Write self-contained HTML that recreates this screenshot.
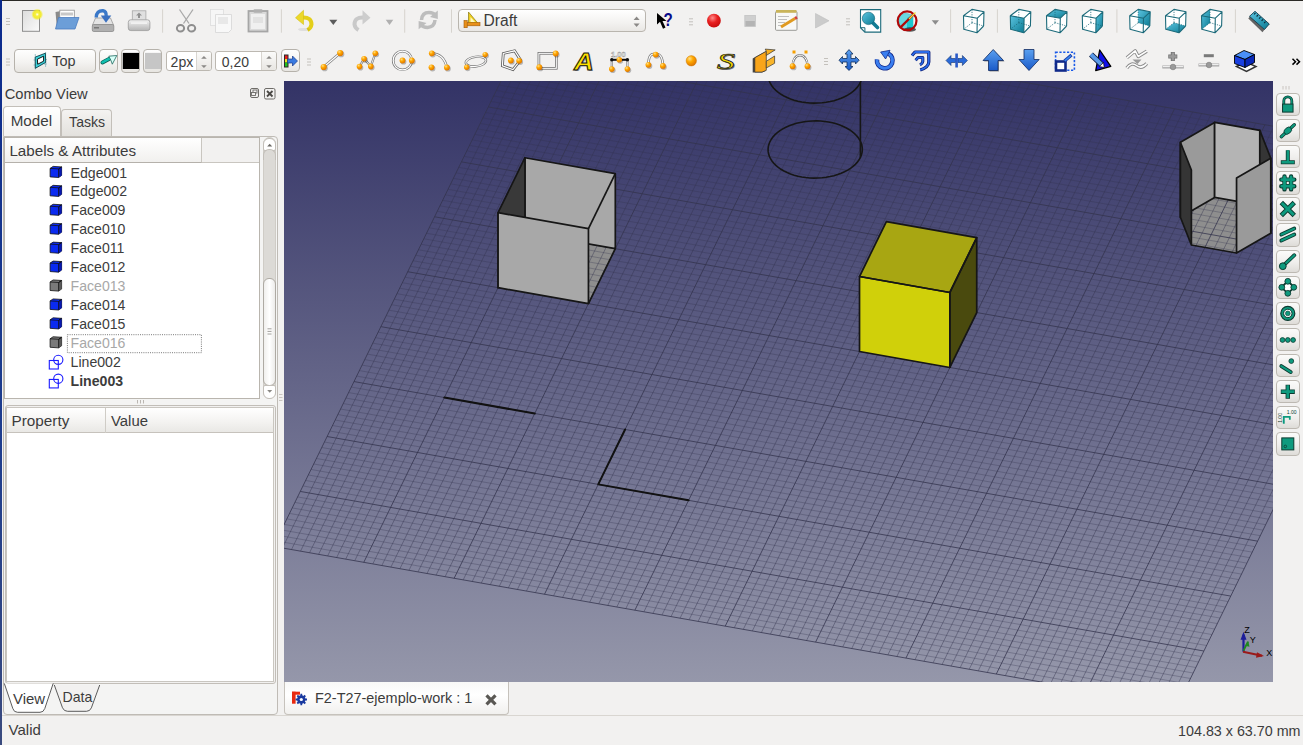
<!DOCTYPE html><html><head><meta charset="utf-8"><style>
*{margin:0;padding:0;box-sizing:border-box}
html,body{width:1303px;height:745px;overflow:hidden;background:#f2f1f0}
body{position:relative;font-family:"Liberation Sans",sans-serif;color:#3c3c3c;font-size:14px}
.a{position:absolute}
.t{position:absolute;white-space:nowrap;line-height:1}
</style></head><body><div class="a" style="left:0;top:0;width:1303px;height:1px;background:#2b2a26"></div>
<svg width="989" height="601" viewBox="284 81 989 601" style="position:absolute;left:284px;top:81px;display:block">
<defs><linearGradient id="bg" x1="0" y1="0" x2="0" y2="1"><stop offset="0" stop-color="#333366"/><stop offset="1" stop-color="#9597aa"/></linearGradient></defs>
<rect x="284" y="81" width="989" height="601" fill="url(#bg)"/>
<polygon points="524.94,232.74 615.3,248.7 588.44,303.63 498.08,287.67" fill="#8e8e8e"/>
<polygon points="1180.41,217.23 1214.63,197.43 1259.81,205.41 1270.77,233.19 1236.55,252.99 1191.37,245.01" fill="#8e8e8e"/>
<path d="M551.06 -1.34 L282.46 547.96 M560.09 0.25 L291.49 549.55 M569.13 1.85 L300.53 551.15 M578.16 3.44 L309.56 552.74 M587.2 5.04 L318.6 554.34 M596.24 6.64 L327.64 555.94 M605.27 8.23 L336.67 557.53 M614.31 9.83 L345.71 559.13 M623.34 11.42 L354.74 560.72 M641.42 14.62 L372.82 563.92 M650.45 16.21 L381.85 565.51 M659.49 17.81 L390.89 567.11 M668.52 19.4 L399.92 568.7 M677.56 21 L408.96 570.3 M686.6 22.6 L418 571.9 M695.63 24.19 L427.03 573.49 M704.67 25.79 L436.07 575.09 M713.7 27.38 L445.1 576.68 M731.78 30.58 L463.18 579.88 M740.81 32.17 L472.21 581.47 M749.85 33.77 L481.25 583.07 M758.88 35.36 L490.28 584.66 M767.92 36.96 L499.32 586.26 M776.96 38.56 L508.36 587.86 M785.99 40.15 L517.39 589.45 M795.03 41.75 L526.43 591.05 M804.06 43.34 L535.46 592.64 M822.14 46.54 L553.54 595.84 M831.17 48.13 L562.57 597.43 M840.21 49.73 L571.61 599.03 M849.24 51.32 L580.64 600.62 M858.28 52.92 L589.68 602.22 M867.32 54.52 L598.72 603.82 M876.35 56.11 L607.75 605.41 M885.39 57.71 L616.79 607.01 M894.42 59.3 L625.82 608.6 M912.5 62.5 L643.9 611.8 M921.53 64.09 L652.93 613.39 M930.57 65.69 L661.97 614.99 M939.6 67.28 L671 616.58 M948.64 68.88 L680.04 618.18 M957.68 70.48 L689.08 619.78 M966.71 72.07 L698.11 621.37 M975.75 73.67 L707.15 622.97 M984.78 75.26 L716.18 624.56 M1002.86 78.46 L734.26 627.76 M1011.89 80.05 L743.29 629.35 M1020.93 81.65 L752.33 630.95 M1029.96 83.24 L761.36 632.54 M1039 84.84 L770.4 634.14 M1048.04 86.44 L779.44 635.74 M1057.07 88.03 L788.47 637.33 M1066.11 89.63 L797.51 638.93 M1075.14 91.22 L806.54 640.52 M1093.22 94.42 L824.62 643.72 M1102.25 96.01 L833.65 645.31 M1111.29 97.61 L842.69 646.91 M1120.32 99.2 L851.72 648.5 M1129.36 100.8 L860.76 650.1 M1138.4 102.4 L869.8 651.7 M1147.43 103.99 L878.83 653.29 M1156.47 105.59 L887.87 654.89 M1165.5 107.18 L896.9 656.48 M1183.58 110.38 L914.98 659.68 M1192.61 111.97 L924.01 661.27 M1201.65 113.57 L933.05 662.87 M1210.68 115.16 L942.08 664.46 M1219.72 116.76 L951.12 666.06 M1228.76 118.36 L960.16 667.66 M1237.79 119.95 L969.19 669.25 M1246.83 121.55 L978.23 670.85 M1255.86 123.14 L987.26 672.44 M1273.94 126.34 L1005.34 675.64 M1282.97 127.93 L1014.37 677.23 M1292.01 129.53 L1023.41 678.83 M1301.04 131.12 L1032.44 680.42 M1310.08 132.72 L1041.48 682.02 M1319.12 134.32 L1050.52 683.62 M1328.15 135.91 L1059.55 685.21 M1337.19 137.51 L1068.59 686.81 M1346.22 139.1 L1077.62 688.4 M1364.3 142.3 L1095.7 691.6 M1373.33 143.89 L1104.73 693.19 M1382.37 145.49 L1113.77 694.79 M1391.4 147.08 L1122.8 696.38 M1400.44 148.68 L1131.84 697.98 M1409.48 150.28 L1140.88 699.58 M1418.51 151.87 L1149.91 701.17 M1427.55 153.47 L1158.95 702.77 M1436.58 155.06 L1167.98 704.36" stroke="#33334d" stroke-opacity="0.42" stroke-width="1" fill="none"/>
<path d="M539.33 2.55 L1442.93 162.15 M536.65 8.05 L1440.25 167.65 M533.96 13.54 L1437.56 173.14 M531.28 19.03 L1434.88 178.63 M528.59 24.52 L1432.19 184.13 M525.9 30.02 L1429.5 189.62 M523.22 35.51 L1426.82 195.11 M520.53 41 L1424.13 200.6 M517.85 46.5 L1421.45 206.1 M512.47 57.48 L1416.07 217.08 M509.79 62.98 L1413.39 222.58 M507.1 68.47 L1410.7 228.07 M504.42 73.96 L1408.02 233.56 M501.73 79.45 L1405.33 239.06 M499.04 84.95 L1402.64 244.55 M496.36 90.44 L1399.96 250.04 M493.67 95.93 L1397.27 255.53 M490.99 101.43 L1394.59 261.03 M485.61 112.41 L1389.21 272.01 M482.93 117.91 L1386.53 277.51 M480.24 123.4 L1383.84 283 M477.56 128.89 L1381.16 288.49 M474.87 134.38 L1378.47 293.99 M472.18 139.88 L1375.78 299.48 M469.5 145.37 L1373.1 304.97 M466.81 150.86 L1370.41 310.46 M464.13 156.36 L1367.73 315.96 M458.75 167.34 L1362.35 326.94 M456.07 172.84 L1359.67 332.44 M453.38 178.33 L1356.98 337.93 M450.7 183.82 L1354.3 343.42 M448.01 189.31 L1351.61 348.92 M445.32 194.81 L1348.92 354.41 M442.64 200.3 L1346.24 359.9 M439.95 205.79 L1343.55 365.39 M437.27 211.29 L1340.87 370.89 M431.89 222.27 L1335.49 381.87 M429.21 227.77 L1332.81 387.37 M426.52 233.26 L1330.12 392.86 M423.84 238.75 L1327.44 398.35 M421.15 244.25 L1324.75 403.85 M418.46 249.74 L1322.06 409.34 M415.78 255.23 L1319.38 414.83 M413.09 260.72 L1316.69 420.32 M410.41 266.22 L1314.01 425.82 M405.03 277.2 L1308.63 436.8 M402.35 282.7 L1305.95 442.3 M399.66 288.19 L1303.26 447.79 M396.98 293.68 L1300.58 453.28 M394.29 299.18 L1297.89 458.78 M391.6 304.67 L1295.2 464.27 M388.92 310.16 L1292.52 469.76 M386.23 315.65 L1289.83 475.25 M383.55 321.15 L1287.15 480.75 M378.17 332.13 L1281.77 491.73 M375.49 337.63 L1279.09 497.23 M372.8 343.12 L1276.4 502.72 M370.12 348.61 L1273.72 508.21 M367.43 354.11 L1271.03 513.71 M364.74 359.6 L1268.34 519.2 M362.06 365.09 L1265.66 524.69 M359.37 370.58 L1262.97 530.18 M356.69 376.08 L1260.29 535.68 M351.31 387.06 L1254.91 546.66 M348.63 392.56 L1252.23 552.16 M345.94 398.05 L1249.54 557.65 M343.26 403.54 L1246.86 563.14 M340.57 409.03 L1244.17 568.64 M337.88 414.53 L1241.48 574.13 M335.2 420.02 L1238.8 579.62 M332.51 425.51 L1236.11 585.11 M329.83 431.01 L1233.43 590.61 M324.45 441.99 L1228.05 601.59 M321.77 447.49 L1225.37 607.09 M319.08 452.98 L1222.68 612.58 M316.4 458.47 L1220 618.07 M313.71 463.96 L1217.31 623.57 M311.02 469.46 L1214.62 629.06 M308.34 474.95 L1211.94 634.55 M305.65 480.44 L1209.25 640.04 M302.97 485.94 L1206.57 645.54 M297.59 496.92 L1201.19 656.52 M294.91 502.42 L1198.51 662.02 M292.22 507.91 L1195.82 667.51 M289.54 513.4 L1193.14 673 M286.85 518.89 L1190.45 678.5 M284.16 524.39 L1187.76 683.99 M281.48 529.88 L1185.08 689.48 M278.79 535.37 L1182.39 694.97 M276.11 540.87 L1179.71 700.47" stroke="#33334d" stroke-opacity="0.3" stroke-width="1" fill="none"/>
<path d="M542.02 -2.94 L273.42 546.36 M632.38 13.02 L363.78 562.32 M722.74 28.98 L454.14 578.28 M813.1 44.94 L544.5 594.24 M903.46 60.9 L634.86 610.2 M993.82 76.86 L725.22 626.16 M1084.18 92.82 L815.58 642.12 M1174.54 108.78 L905.94 658.08 M1264.9 124.74 L996.3 674.04 M1355.26 140.7 L1086.66 690 M1445.62 156.66 L1177.02 705.96 M542.02 -2.94 L1445.62 156.66 M515.16 51.99 L1418.76 211.59 M488.3 106.92 L1391.9 266.52 M461.44 161.85 L1365.04 321.45 M434.58 216.78 L1338.18 376.38 M407.72 271.71 L1311.32 431.31 M380.86 326.64 L1284.46 486.24 M354 381.57 L1257.6 541.17 M327.14 436.5 L1230.74 596.1 M300.28 491.43 L1203.88 651.03 M273.42 546.36 L1177.02 705.96" stroke="#33334d" stroke-opacity="0.78" stroke-width="1" fill="none"/>
<path d="M444.36 397.53 L534.72 413.49" fill="none" stroke="#111" stroke-width="2" stroke-linecap="round"/>
<path d="M625.08 429.45 L598.22 484.38 L688.58 500.34" fill="none" stroke="#111" stroke-width="2" stroke-linejoin="round" stroke-linecap="round"/>
<path d="M860.38 157.48 L859.04 159.84 L857.36 162.13 L855.36 164.32 L853.06 166.39 L850.47 168.34 L847.61 170.14 L844.51 171.79 L841.18 173.27 L837.65 174.56 L833.95 175.67 L830.11 176.58 L826.16 177.28 L822.12 177.76 L818.03 178.04 L813.92 178.09 L809.82 177.93 L805.76 177.56 L801.77 176.97 L797.88 176.16 L794.13 175.16 L790.53 173.96 L787.13 172.58 L783.93 171.02 L780.98 169.3 L778.28 167.42 L775.87 165.41 L773.76 163.28 L771.96 161.04 L770.49 158.72 L769.36 156.32 L768.58 153.87 L768.15 151.39 L768.08 148.9 L768.37 146.41 L769.02 143.94 L770.02 141.52 L771.36 139.16 L773.04 136.87 L775.04 134.68 L777.34 132.61 L779.93 130.66 L782.79 128.86 L785.89 127.21 L789.22 125.73 L792.75 124.44 L796.45 123.33 L800.29 122.42 L804.24 121.72 L808.28 121.24 L812.37 120.96 L816.48 120.91 L820.58 121.07 L824.64 121.44 L828.63 122.03 L832.52 122.84 L836.27 123.84 L839.87 125.04 L843.27 126.42 L846.47 127.98 L849.42 129.7 L852.12 131.58 L854.53 133.59 L856.64 135.72 L858.44 137.96 L859.91 140.28 L861.04 142.68 L861.82 145.13 L862.25 147.61 L862.32 150.1 L862.03 152.59 L861.38 155.06 L860.38 157.48 Z" fill="none" stroke="#161616" stroke-width="1.6"/>
<path d="M860.38 82.48 L859.04 84.84 L857.36 87.13 L855.36 89.32 L853.06 91.39 L850.47 93.34 L847.61 95.14 L844.51 96.79 L841.18 98.27 L837.65 99.56 L833.95 100.67 L830.11 101.58 L826.16 102.28 L822.12 102.76 L818.03 103.04 L813.92 103.09 L809.82 102.93 L805.76 102.56 L801.77 101.97 L797.88 101.16 L794.13 100.16 L790.53 98.96 L787.13 97.58 L783.93 96.02 L780.98 94.3 L778.28 92.42 L775.87 90.41 L773.76 88.28 L771.96 86.04 L770.49 83.72 L769.36 81.32 L768.58 78.87 L768.15 76.39 L768.08 73.9 L768.37 71.41 L769.02 68.94 L770.02 66.52 L771.36 64.16 L773.04 61.87 L775.04 59.68 L777.34 57.61 L779.93 55.66 L782.79 53.86 L785.89 52.21 L789.22 50.73 L792.75 49.44 L796.45 48.33 L800.29 47.42 L804.24 46.72 L808.28 46.24 L812.37 45.96 L816.48 45.91 L820.58 46.07 L824.64 46.44 L828.63 47.03 L832.52 47.84 L836.27 48.84 L839.87 50.04 L843.27 51.42 L846.47 52.98 L849.42 54.7 L852.12 56.58 L854.53 58.59 L856.64 60.72 L858.44 62.96 L859.91 65.28 L861.04 67.68 L861.82 70.13 L862.25 72.61 L862.32 75.1 L862.03 77.59 L861.38 80.06 L860.38 82.48 Z" fill="none" stroke="#161616" stroke-width="1.6"/>
<line x1="860.38" y1="82.48" x2="860.38" y2="157.48" stroke="#161616" stroke-width="1.6"/>
<polygon points="524.94,232.74 615.3,248.7 615.3,173.7 524.94,157.74" fill="#a8a8a8"/>
<path d="M524.94 232.74 L615.3 248.7 L615.3 173.7 L524.94 157.74 Z" fill="none" stroke="#161616" stroke-width="1.7" stroke-linejoin="round"/>
<polygon points="524.94,232.74 498.08,287.67 498.08,212.67 524.94,157.74" fill="#393939"/>
<path d="M524.94 232.74 L498.08 287.67 L498.08 212.67 L524.94 157.74 Z" fill="none" stroke="#161616" stroke-width="1.7" stroke-linejoin="round"/>
<path d="M588.44 303.63 L615.3 248.7" fill="none" stroke="#161616" stroke-width="1.7"/>
<path d="M588.44 228.63 L615.3 173.7" fill="none" stroke="#161616" stroke-width="1.7"/>
<polygon points="498.08,287.67 588.44,303.63 588.44,228.63 498.08,212.67" fill="#a8a8a8"/>
<path d="M498.08 287.67 L588.44 303.63 L588.44 228.63 L498.08 212.67 Z" fill="none" stroke="#161616" stroke-width="1.7" stroke-linejoin="round"/>
<polygon points="886.38,221.58 976.74,237.54 949.88,292.47 859.52,276.51" fill="#a8a612"/>
<polygon points="859.52,351.51 949.88,367.47 949.88,292.47 859.52,276.51" fill="#d0d00a"/>
<polygon points="949.88,367.47 976.74,312.54 976.74,237.54 949.88,292.47" fill="#4a4a0e"/>
<path d="M886.38 221.58 L976.74 237.54 L949.88 292.47 L859.52 276.51 Z" fill="none" stroke="#161616" stroke-width="1.7" stroke-linejoin="round"/>
<path d="M859.52 351.51 L949.88 367.47 L949.88 292.47 L859.52 276.51 Z" fill="none" stroke="#161616" stroke-width="1.7" stroke-linejoin="round"/>
<path d="M949.88 367.47 L976.74 312.54 L976.74 237.54 L949.88 292.47 Z" fill="none" stroke="#161616" stroke-width="1.7" stroke-linejoin="round"/>
<polygon points="1180.41,217.23 1214.63,197.43 1214.63,122.43 1180.41,142.23" fill="#9a9a9a"/>
<path d="M1180.41 217.23 L1214.63 197.43 L1214.63 122.43 L1180.41 142.23 Z" fill="none" stroke="#161616" stroke-width="1.7" stroke-linejoin="round"/>
<polygon points="1214.63,197.43 1259.81,205.41 1259.81,130.41 1214.63,122.43" fill="#b4b4b4"/>
<path d="M1214.63 197.43 L1259.81 205.41 L1259.81 130.41 L1214.63 122.43 Z" fill="none" stroke="#161616" stroke-width="1.7" stroke-linejoin="round"/>
<polygon points="1259.81,205.41 1270.77,233.19 1270.77,158.19 1259.81,130.41" fill="#353535"/>
<path d="M1259.81 205.41 L1270.77 233.19 L1270.77 158.19 L1259.81 130.41 Z" fill="none" stroke="#161616" stroke-width="1.7" stroke-linejoin="round"/>
<polygon points="1191.37,245.01 1180.41,217.23 1180.41,142.23 1191.37,170.01" fill="#353535"/>
<path d="M1191.37 245.01 L1180.41 217.23 L1180.41 142.23 L1191.37 170.01 Z" fill="none" stroke="#161616" stroke-width="1.7" stroke-linejoin="round"/>
<polygon points="1270.77,233.19 1236.55,252.99 1236.55,177.99 1270.77,158.19" fill="#9a9a9a"/>
<path d="M1270.77 233.19 L1236.55 252.99 L1236.55 177.99 L1270.77 158.19 Z" fill="none" stroke="#161616" stroke-width="1.7" stroke-linejoin="round"/>
<path d="M1236.55 252.99 L1191.37 245.01" fill="none" stroke="#161616" stroke-width="1.7"/>
<g stroke-linecap="butt">
<line x1="1243.5" y1="651.7" x2="1243.5" y2="634.7" stroke="#1d1d9a" stroke-width="2.2"/>
<polygon points="1243.5,631.7 1240.5,639.7 1246.5,639.7" fill="#1d1d9a"/>
<line x1="1243" y1="651.7" x2="1262" y2="655.7" stroke="#9a1a1a" stroke-width="2"/>
<polygon points="1264,656 1257,652.2 1256,657.7" fill="#9a1a1a"/>
<line x1="1243.5" y1="650.7" x2="1248" y2="641.7" stroke="#1f8a1f" stroke-width="1.8"/>
<polygon points="1248.3,641.2 1245,645.7 1249.5,646.7" fill="#1f8a1f"/>
</g>
<g font-family="Liberation Sans, sans-serif" font-size="9" fill="#000">
<text x="1244.3" y="633">Z</text><text x="1249.8" y="642.6">Y</text><text x="1266.3" y="656">X</text>
</g>
</svg>
<div class="a" style="left:458px;top:9.3px;width:187.5px;height:22.6px;border:1px solid #b9b5ae;border-radius:4px;background:linear-gradient(#ffffff,#f3f2f0 60%,#e9e7e4)"></div>
<div class="t" style="left:483.5px;top:12.59px;font-size:15.6px;color:#3c3c3c;">Draft</div>
<div class="a" style="left:14.2px;top:49.4px;width:82px;height:23.2px;border:1px solid #b6b2ab;border-radius:4px;background:linear-gradient(#fefefe,#f4f3f1 55%,#e7e5e1)"></div>
<div class="t" style="left:52.2px;top:53.81px;font-size:14.4px;color:#3c3c3c;">Top</div>
<div class="a" style="left:99.2px;top:49.4px;width:19.1px;height:23.2px;border:1px solid #b6b2ab;border-radius:4px;background:linear-gradient(#fefefe,#f4f3f1 55%,#e7e5e1)"></div>
<div class="a" style="left:121.2px;top:49.4px;width:19.1px;height:23.2px;border:1px solid #b6b2ab;border-radius:4px;background:linear-gradient(#fefefe,#f4f3f1 55%,#e7e5e1)"></div>
<div class="a" style="left:143.2px;top:49.4px;width:19.1px;height:23.2px;border:1px solid #b6b2ab;border-radius:4px;background:linear-gradient(#fefefe,#f4f3f1 55%,#e7e5e1)"></div>
<div class="a" style="left:165.6px;top:51.2px;width:46.1px;height:19.6px;border:1px solid #bcb8b1;border-radius:3px;background:#fff"></div>
<div class="a" style="left:196.2px;top:52.2px;width:14.5px;height:17.6px;border-left:1px solid #d8d5d0;border-radius:0 2px 2px 0;background:linear-gradient(#fbfbfa,#e8e6e2)"></div>
<div class="t" style="left:170.6px;top:54.86px;font-size:14.1px;color:#3c3c3c;">2px</div>
<div class="a" style="left:215.3px;top:51.2px;width:61.5px;height:19.6px;border:1px solid #bcb8b1;border-radius:3px;background:#fff"></div>
<div class="a" style="left:261.3px;top:52.2px;width:14.5px;height:17.6px;border-left:1px solid #d8d5d0;border-radius:0 2px 2px 0;background:linear-gradient(#fbfbfa,#e8e6e2)"></div>
<div class="t" style="left:221.8px;top:54.95px;font-size:14px;color:#3c3c3c;">0,20</div>
<div class="a" style="left:280.5px;top:49.3px;width:19.2px;height:23.1px;border:1px solid #b6b2ab;border-radius:4px;background:linear-gradient(#fefefe,#f4f3f1 55%,#e7e5e1)"></div>
<div class="t" style="left:4.7px;top:86.96px;font-size:14.7px;color:#3c3c3c;">Combo View</div>
<div class="a" style="left:2.5px;top:135.5px;width:275.5px;height:579.5px;border:1px solid #bfbbb5;border-radius:0 4px 4px 4px;background:#f4f4f3"></div>
<div class="a" style="left:60.7px;top:108.9px;width:50.9px;height:27.1px;border:1px solid #c3bfb9;border-bottom:none;border-radius:4px 4px 0 0;background:linear-gradient(#f4f3f1,#e3e1dd)"></div>
<div class="a" style="left:2.7px;top:106.2px;width:58.3px;height:30.3px;border:1px solid #c3bfb9;border-bottom:none;border-radius:4px 4px 0 0;background:linear-gradient(#ffffff,#f4f3f1)"></div>
<div class="t" style="left:10.7px;top:112.73px;font-size:15.2px;color:#3c3c3c;">Model</div>
<div class="t" style="left:69.1px;top:115.06px;font-size:14.1px;color:#3c3c3c;">Tasks</div>
<div class="a" style="left:4.3px;top:137px;width:256px;height:262px;border:1px solid #b9b5ae;background:#fff"></div>
<div class="a" style="left:5.3px;top:138px;width:254px;height:25.2px;background:#f2f1f0;border-bottom:1px solid #c9c6c0"></div>
<div class="a" style="left:5.3px;top:138px;width:197px;height:25.2px;background:linear-gradient(#ffffff,#f1f0ee);border-right:1px solid #c9c6c0;border-bottom:1px solid #b5b1ab"></div>
<div class="t" style="left:9.4px;top:142.93px;font-size:15.2px;color:#3c3c3c;">Labels &amp; Attributes</div>
<div class="t" style="left:70.6px;top:165.56px;font-size:14.1px;color:#3c3c3c;">Edge001</div>
<div class="t" style="left:70.6px;top:184.49px;font-size:14.1px;color:#3c3c3c;">Edge002</div>
<div class="t" style="left:70.6px;top:203.42px;font-size:14.1px;color:#3c3c3c;">Face009</div>
<div class="t" style="left:70.6px;top:222.35px;font-size:14.1px;color:#3c3c3c;">Face010</div>
<div class="t" style="left:70.6px;top:241.28px;font-size:14.1px;color:#3c3c3c;">Face011</div>
<div class="t" style="left:70.6px;top:260.21px;font-size:14.1px;color:#3c3c3c;">Face012</div>
<div class="t" style="left:70.6px;top:279.14px;font-size:14.1px;color:#a8a8a8;">Face013</div>
<div class="t" style="left:70.6px;top:298.07px;font-size:14.1px;color:#3c3c3c;">Face014</div>
<div class="t" style="left:70.6px;top:317px;font-size:14.1px;color:#3c3c3c;">Face015</div>
<div class="t" style="left:70.6px;top:335.93px;font-size:14.1px;color:#a8a8a8;">Face016</div>
<div class="t" style="left:70.6px;top:354.86px;font-size:14.1px;color:#3c3c3c;">Line002</div>
<div class="t" style="left:70.6px;top:373.79px;font-size:14.1px;color:#3c3c3c;font-weight:bold;">Line003</div>
<div class="a" style="left:262.8px;top:137px;width:13.6px;height:262.2px;border:1px solid #cfccc6;border-radius:7px;background:#dcdad6"></div>
<div class="a" style="left:263.4px;top:137.6px;width:12.4px;height:13.4px;border:1px solid #c3bfb9;border-radius:6px 6px 2px 2px;background:#fff"></div>
<div class="a" style="left:263.4px;top:148.7px;width:12.4px;height:11.3px;border:1px solid #c3bfb9;border-bottom:none;border-radius:6px 6px 0 0;background:#dcdad6"></div>
<div class="a" style="left:263.4px;top:278px;width:12.4px;height:107.5px;border:1px solid #aeaaa3;border-radius:6px;background:linear-gradient(90deg,#f0efed,#ffffff 50%,#ecebe9)"></div>
<div class="a" style="left:263.4px;top:385px;width:12.4px;height:14px;border:1px solid #c3bfb9;border-radius:2px 2px 6px 6px;background:#fff"></div>
<div class="a" style="left:4.5px;top:405px;width:271.5px;height:278.6px;border:1px solid #c2beb8;border-radius:3px;background:#f2f1f0"></div>
<div class="a" style="left:5.5px;top:406.8px;width:268.8px;height:275.4px;border:1px solid #c9c6c0;background:#fff"></div>
<div class="a" style="left:6.5px;top:407.8px;width:266.8px;height:25px;background:linear-gradient(#ffffff,#f3f2f0 60%,#e9e8e5);border-bottom:1px solid #c6c2bc"></div>
<div class="a" style="left:6.5px;top:407.8px;width:99.9px;height:25px;border-right:1px solid #cfccc6"></div>
<div class="t" style="left:11.5px;top:412.75px;font-size:15.3px;color:#3c3c3c;">Property</div>
<div class="t" style="left:111px;top:413.79px;font-size:14.9px;color:#3c3c3c;">Value</div>
<div class="a" style="left:284px;top:682px;width:224.6px;height:32.5px;border:1px solid #c6c2bc;border-top:none;border-radius:0 0 4px 4px;background:linear-gradient(#f8f8f7,#ffffff 40%,#f1f0ee)"></div>
<div class="t" style="left:315px;top:691.37px;font-size:14.45px;color:#3c3c3c;">F2-T27-ejemplo-work : 1</div>
<div class="a" style="left:0px;top:715px;width:1303px;height:1px;background:#d9d6d1"></div>
<div class="t" style="left:8.6px;top:722px;font-size:15px;color:#3c3c3c;">Valid</div>
<div class="t" style="left:1178.1px;top:723.9px;font-size:14.3px;color:#3c3c3c;">104.83 x 63.70 mm</div>
<div class="a" style="left:1276px;top:92.9px;width:23.6px;height:23.4px;border:1px solid #bdb9b2;border-radius:4px;background:linear-gradient(#fbfbfa,#efeeec 55%,#dedcd8)"></div>
<div class="a" style="left:1276px;top:119px;width:23.6px;height:23.4px;border:1px solid #bdb9b2;border-radius:4px;background:linear-gradient(#fbfbfa,#efeeec 55%,#dedcd8)"></div>
<div class="a" style="left:1276px;top:145.1px;width:23.6px;height:23.4px;border:1px solid #bdb9b2;border-radius:4px;background:linear-gradient(#fbfbfa,#efeeec 55%,#dedcd8)"></div>
<div class="a" style="left:1276px;top:171.2px;width:23.6px;height:23.4px;border:1px solid #bdb9b2;border-radius:4px;background:linear-gradient(#fbfbfa,#efeeec 55%,#dedcd8)"></div>
<div class="a" style="left:1276px;top:197.3px;width:23.6px;height:23.4px;border:1px solid #bdb9b2;border-radius:4px;background:linear-gradient(#fbfbfa,#efeeec 55%,#dedcd8)"></div>
<div class="a" style="left:1276px;top:223.4px;width:23.6px;height:23.4px;border:1px solid #bdb9b2;border-radius:4px;background:linear-gradient(#fbfbfa,#efeeec 55%,#dedcd8)"></div>
<div class="a" style="left:1276px;top:249.5px;width:23.6px;height:23.4px;border:1px solid #bdb9b2;border-radius:4px;background:linear-gradient(#fbfbfa,#efeeec 55%,#dedcd8)"></div>
<div class="a" style="left:1276px;top:275.6px;width:23.6px;height:23.4px;border:1px solid #bdb9b2;border-radius:4px;background:linear-gradient(#fbfbfa,#efeeec 55%,#dedcd8)"></div>
<div class="a" style="left:1276px;top:301.7px;width:23.6px;height:23.4px;border:1px solid #bdb9b2;border-radius:4px;background:linear-gradient(#fbfbfa,#efeeec 55%,#dedcd8)"></div>
<div class="a" style="left:1276px;top:327.8px;width:23.6px;height:23.4px;border:1px solid #bdb9b2;border-radius:4px;background:linear-gradient(#fbfbfa,#efeeec 55%,#dedcd8)"></div>
<div class="a" style="left:1276px;top:353.9px;width:23.6px;height:23.4px;border:1px solid #bdb9b2;border-radius:4px;background:linear-gradient(#fbfbfa,#efeeec 55%,#dedcd8)"></div>
<div class="a" style="left:1276px;top:380px;width:23.6px;height:23.4px;border:1px solid #bdb9b2;border-radius:4px;background:linear-gradient(#fbfbfa,#efeeec 55%,#dedcd8)"></div>
<div class="a" style="left:1276px;top:406.1px;width:23.6px;height:23.4px;border:1px solid #bdb9b2;border-radius:4px;background:linear-gradient(#fbfbfa,#efeeec 55%,#dedcd8)"></div>
<div class="a" style="left:1276px;top:432.2px;width:23.6px;height:23.4px;border:1px solid #bdb9b2;border-radius:4px;background:linear-gradient(#fbfbfa,#efeeec 55%,#dedcd8)"></div>
<svg width="1303" height="745" viewBox="0 0 1303 745" style="position:absolute;left:0;top:0"><rect x="6" y="18" width="4" height="1" fill="#c4c1bc"/>
<rect x="6" y="21" width="4" height="1" fill="#c4c1bc"/>
<rect x="6" y="24" width="4" height="1" fill="#c4c1bc"/>
<defs><linearGradient id="gpage" x1="0" y1="0" x2="1" y2="1"><stop offset="0" stop-color="#dcdcdc"/><stop offset="1" stop-color="#fbfbfb"/></linearGradient><radialGradient id="gglow"><stop offset="0" stop-color="#ffffff"/><stop offset="0.3" stop-color="#f6f040"/><stop offset="0.65" stop-color="#f2ea20" stop-opacity="0.9"/><stop offset="1" stop-color="#f4ee30" stop-opacity="0"/></radialGradient><radialGradient id="gred" cx="0.4" cy="0.3" r="0.7"><stop offset="0" stop-color="#ff8a8a"/><stop offset="0.5" stop-color="#e82020"/><stop offset="1" stop-color="#c80c0c"/></radialGradient><radialGradient id="gorange" cx="0.35" cy="0.3" r="0.7"><stop offset="0" stop-color="#ffe08a"/><stop offset="0.45" stop-color="#ffa800"/><stop offset="1" stop-color="#e07800"/></radialGradient><linearGradient id="gteal" x1="0" y1="0" x2="1" y2="1"><stop offset="0" stop-color="#5cc4e0"/><stop offset="1" stop-color="#0b7b93"/></linearGradient><linearGradient id="gblue" x1="0" y1="0" x2="0" y2="1"><stop offset="0" stop-color="#5aa0f0"/><stop offset="1" stop-color="#1a5ac8"/></linearGradient><linearGradient id="gbtn" x1="0" y1="0" x2="0" y2="1"><stop offset="0" stop-color="#fdfdfc"/><stop offset="1" stop-color="#e6e4e0"/></linearGradient><linearGradient id="gprinter" x1="0" y1="0" x2="0" y2="1"><stop offset="0" stop-color="#f4f4f4"/><stop offset="1" stop-color="#b4b4b4"/></linearGradient></defs>
<rect x="22.5" y="10.5" width="17" height="20.8" fill="url(#gpage)" stroke="#8e8e8e" stroke-width="1"/>
<circle cx="37.2" cy="14.4" r="6" fill="url(#gglow)"/>
<polygon points="55.5,12 61,11 61,28 57,29" fill="#8a8a8a"/>
<rect x="59.8" y="10.2" width="14.5" height="9" fill="#fff" stroke="#909090" stroke-width="0.8"/>
<rect x="61" y="12.5" width="12" height="3" fill="#c8c8c8"/>
<polygon points="58.5,17.5 79,17.5 75,29 55.5,29" fill="#6c9ed8" stroke="#4a7cc0" stroke-width="0.8"/>
<polygon points="95.5,18 110.5,18 113.5,25 92.5,25" fill="#e4e4e4" stroke="#9a9a9a" stroke-width="0.8"/>
<rect x="92.3" y="24.5" width="21.5" height="7" rx="1.5" fill="#b0b0b0" stroke="#8a8a8a" stroke-width="0.8"/>
<rect x="94" y="27" width="5" height="1.5" fill="#777"/>
<path d="M96.2 17.5 Q96.5 10.5 103 10.8 Q106.5 11.2 106.2 16.5" fill="none" stroke="#3a78c8" stroke-width="3.4"/>
<polygon points="100.8,15.5 111.3,15.5 106,22.8" fill="#3a70c0"/>
<rect x="132.3" y="10.8" width="13.6" height="10" fill="#e0e0e0" stroke="#a8a8a8" stroke-width="0.8"/>
<polygon points="139,12.5 142,15.5 140,15.5 140,18 138,18 138,15.5 136,15.5" fill="#909090"/>
<rect x="128.3" y="19.8" width="21.6" height="10.8" rx="2.5" fill="url(#gprinter)" stroke="#9a9a9a" stroke-width="0.8"/>
<rect x="131" y="22.5" width="16" height="1.2" fill="#fafafa"/>
<rect x="162.1" y="9.3" width="1" height="23.4" fill="#d6d3ce"/>
<g fill="none" stroke="#a8a8a8" stroke-width="1.3"><path d="M179.5 9.5 L189 23.5"/><path d="M193 9.5 L183.5 23.5"/></g>
<g fill="none" stroke="#8e8e8e" stroke-width="2"><ellipse cx="180.5" cy="28.2" rx="3.6" ry="3.3"/><ellipse cx="191.6" cy="28.2" rx="3.6" ry="3.3"/></g>
<rect x="210.5" y="9.5" width="13" height="16" fill="#f6f6f6" stroke="#dcdcdc" stroke-width="0.8"/>
<path d="M215.5 14.5 h16 v15 l-3 3 h-13 z" fill="#f8f8f8" stroke="#d6d6d6" stroke-width="0.8"/>
<rect x="218" y="17" width="10" height="7" fill="#e8e8e8"/>
<rect x="248.5" y="11" width="19" height="20.5" fill="#dadada" stroke="#a6a6a6" stroke-width="1.8"/>
<rect x="251" y="14" width="14" height="15" fill="#f0f0f0"/>
<rect x="253.5" y="9.3" width="9" height="3.5" rx="1" fill="#b0b0b0"/>
<rect x="253" y="17" width="10" height="6" fill="#e2e2e2"/>
<rect x="280.9" y="9.3" width="1" height="23.4" fill="#d6d3ce"/>
<path d="M302.5 17.5 Q311.5 17 311.5 24.5 Q311 28 307.5 30" fill="none" stroke="#e4cf1a" stroke-width="4"/>
<polygon points="295.5,17.8 303.5,10.3 303.5,24.5" fill="#ecd82a" stroke="#d4c010" stroke-width="0.6"/>
<ellipse cx="304" cy="29.5" rx="6" ry="1.6" fill="#000" opacity="0.08"/>
<polygon points="329.3,19.8 337.3,19.8 333.3,25" fill="#5c5c5c"/>
<path d="M363.5 17.5 Q354.5 17 354.5 24.5 Q355 28 358.5 30" fill="none" stroke="#c9c9c9" stroke-width="4"/>
<polygon points="370.5,17.8 362.5,10.3 362.5,24.5" fill="#cdcdcd"/>
<polygon points="385.7,19.8 393.3,19.8 389.5,25" fill="#b0b0b0"/>
<rect x="404.2" y="9.3" width="1" height="23.4" fill="#d6d3ce"/>
<g fill="none" stroke="#bdbdbd" stroke-width="3.5"><path d="M421.5 20 Q422 12.5 429 12.5 Q433.5 12.5 435.5 15.5"/><path d="M435 20 Q434.5 27 427.5 27.5 Q423 27.5 421 24.5"/></g>
<polygon points="437.8,10.5 437.8,19 430,17" fill="#bdbdbd"/><polygon points="418.6,29.3 418.6,21 426.5,23" fill="#bdbdbd"/>
<rect x="451" y="9.3" width="1" height="23.4" fill="#d6d3ce"/>
<polygon points="468.5,12 468.5,24 478.5,24" fill="#f0d020" stroke="#8a7a10" stroke-width="0.7"/>
<polygon points="470.5,17 470.5,22 475,22" fill="#fff8c0"/>
<rect x="465" y="22.5" width="15" height="3.3" fill="#e8901a" stroke="#a05a08" stroke-width="0.6"/>
<rect x="464" y="20.5" width="3.2" height="7.2" fill="#e8901a" stroke="#a05a08" stroke-width="0.6"/>
<polygon points="633.6,20 639.6,20 636.6,16.6" fill="#8a8886"/><polygon points="633.6,23.5 639.6,23.5 636.6,26.9" fill="#8a8886"/>
<polygon points="657,12.9 657,24.5 660,21.8 663,28.8 665.5,27.6 662.5,21 666.5,21" fill="#000"/>
<g transform="translate(663.6 26.2) scale(0.85 1)"><text x="0" y="0" font-family="Liberation Sans" font-weight="bold" font-size="17.8" fill="#0a0a88">?</text></g>
<rect x="689" y="18.3" width="4" height="1" fill="#c4c1bc"/>
<rect x="689" y="21.3" width="4" height="1" fill="#c4c1bc"/>
<rect x="689" y="24.3" width="4" height="1" fill="#c4c1bc"/>
<circle cx="713.9" cy="20.7" r="6.9" fill="url(#gred)"/>
<rect x="744.8" y="15.4" width="10.6" height="11.2" fill="#cfcfcf" stroke="#c4c4c4" stroke-width="0.8"/>
<rect x="745.5" y="21" width="9.4" height="5" fill="#b4b4b4"/>
<rect x="775.5" y="11.5" width="21.5" height="18.8" rx="1" fill="#f8f8f6" stroke="#9a9a96" stroke-width="1"/>
<rect x="776" y="10" width="20.5" height="2.8" fill="#c9b45a"/>
<g stroke="#b8b8b8" stroke-width="0.9"><path d="M778 16.5h11M778 19.5h9M778 22.5h7M778 25.5h6"/></g>
<path d="M781 27 L795 18.5" stroke="#e09a20" stroke-width="3"/><path d="M795 18.5 L797 17.3" stroke="#d04040" stroke-width="3"/>
<polygon points="815.5,13.5 815.5,28 829,20.8" fill="#cbcbcb" stroke="#bdbdbd" stroke-width="0.6"/>
<rect x="846" y="18.3" width="4" height="1" fill="#c4c1bc"/>
<rect x="846" y="21.3" width="4" height="1" fill="#c4c1bc"/>
<rect x="846" y="24.3" width="4" height="1" fill="#c4c1bc"/>
<path d="M860.5 9.6 h20.2 v22.5 h-15.8 l-4.4 -4.4 z" fill="#fff" stroke="#1d6b7b" stroke-width="1.1"/>
<path d="M860.5 27.7 h4.4 v4.4" fill="none" stroke="#1d6b7b" stroke-width="1"/>
<line x1="872.5" y1="22.5" x2="877.5" y2="27.5" stroke="#137c94" stroke-width="3.6" stroke-linecap="round"/>
<circle cx="868.5" cy="18.4" r="6.2" fill="url(#gteal)" stroke="#0d5f72" stroke-width="0.6"/>
<polygon points="899,16 905,13 913,15 913,27 907,30 899,27" fill="#6ad8e0" stroke="#50b8c0" stroke-width="0.6"/>
<polygon points="907,18 913,15 913,27 907,30" fill="#1ec8d0"/>
<ellipse cx="910" cy="29.5" rx="6" ry="2.2" fill="#333" opacity="0.8"/>
<circle cx="907.1" cy="20.8" r="9.4" fill="none" stroke="#b00808" stroke-width="2.2"/>
<line x1="900.5" y1="27.4" x2="913.7" y2="14.2" stroke="#b00808" stroke-width="2.2"/>
<line x1="909" y1="19" x2="915.5" y2="12.5" stroke="#f0e040" stroke-width="1.2"/>
<polygon points="931.7,20.2 939,20.2 935.35,24.8" fill="#8c8c8c"/>
<rect x="950.1" y="9.3" width="1" height="23.4" fill="#d6d3ce"/>
<polygon points="963.5,15.7 972,9.4 984,11.8 983.6,26 977,32.8 963.8,29.2" fill="#fff"/><path d="M963.5,15.7 L977.3,18.2 L977,32.8 L963.8,29.2 Z M963.5,15.7 L972,9.4 L984,11.8 L977.3,18.2 M984,11.8 L983.6,26 M983.6,26 L977,32.8" stroke="#1c6a7a" stroke-width="1.1" fill="none" stroke-linejoin="round"/><path d="M972,9.4 L972,22.7 M972,22.7 L963.8,29.2 M972,22.7 L983.6,26" stroke="#1c6a7a" stroke-width="0.8" stroke-dasharray="1.2,1.2" fill="none"/>
<rect x="996.9" y="9.3" width="1" height="23.4" fill="#d6d3ce"/>
<polygon points="1010.3,15.7 1018.8,9.4 1030.8,11.8 1030.4,26 1023.8,32.8 1010.6,29.2" fill="#fff"/><polygon points="1010.3,15.7 1024.1,18.2 1023.8,32.8 1010.6,29.2" fill="url(#gteal)"/><path d="M1010.3,15.7 L1024.1,18.2 L1023.8,32.8 L1010.6,29.2 Z M1010.3,15.7 L1018.8,9.4 L1030.8,11.8 L1024.1,18.2 M1030.8,11.8 L1030.4,26 M1030.4,26 L1023.8,32.8" stroke="#1c6a7a" stroke-width="1.1" fill="none" stroke-linejoin="round"/><path d="M1018.8,9.4 L1018.8,22.7 M1018.8,22.7 L1010.6,29.2 M1018.8,22.7 L1030.4,26" stroke="#1c6a7a" stroke-width="0.8" stroke-dasharray="1.2,1.2" fill="none"/>
<polygon points="1046.5,15.7 1055,9.4 1067,11.8 1066.6,26 1060,32.8 1046.8,29.2" fill="#fff"/><polygon points="1046.5,15.7 1055,9.4 1067,11.8 1060.3,18.2" fill="url(#gteal)"/><path d="M1046.5,15.7 L1060.3,18.2 L1060,32.8 L1046.8,29.2 Z M1046.5,15.7 L1055,9.4 L1067,11.8 L1060.3,18.2 M1067,11.8 L1066.6,26 M1066.6,26 L1060,32.8" stroke="#1c6a7a" stroke-width="1.1" fill="none" stroke-linejoin="round"/><path d="M1055,9.4 L1055,22.7 M1055,22.7 L1046.8,29.2 M1055,22.7 L1066.6,26" stroke="#1c6a7a" stroke-width="0.8" stroke-dasharray="1.2,1.2" fill="none"/>
<polygon points="1082.3,15.7 1090.8,9.4 1102.8,11.8 1102.4,26 1095.8,32.8 1082.6,29.2" fill="#fff"/><polygon points="1096.1,18.2 1102.8,11.8 1102.4,26 1095.8,32.8" fill="url(#gteal)"/><path d="M1082.3,15.7 L1096.1,18.2 L1095.8,32.8 L1082.6,29.2 Z M1082.3,15.7 L1090.8,9.4 L1102.8,11.8 L1096.1,18.2 M1102.8,11.8 L1102.4,26 M1102.4,26 L1095.8,32.8" stroke="#1c6a7a" stroke-width="1.1" fill="none" stroke-linejoin="round"/><path d="M1090.8,9.4 L1090.8,22.7 M1090.8,22.7 L1082.6,29.2 M1090.8,22.7 L1102.4,26" stroke="#1c6a7a" stroke-width="0.8" stroke-dasharray="1.2,1.2" fill="none"/>
<rect x="1116.4" y="9.3" width="1" height="23.4" fill="#d6d3ce"/>
<polygon points="1129.7,15.7 1138.2,9.4 1150.2,11.8 1149.8,26 1143.2,32.8 1130,29.2" fill="#fff"/><polygon points="1138.2,9.4 1150.2,11.8 1149.8,26 1138.2,22.7" fill="url(#gteal)"/><path d="M1129.7,15.7 L1143.5,18.2 L1143.2,32.8 L1130,29.2 Z M1129.7,15.7 L1138.2,9.4 L1150.2,11.8 L1143.5,18.2 M1150.2,11.8 L1149.8,26 M1149.8,26 L1143.2,32.8" stroke="#1c6a7a" stroke-width="1.1" fill="none" stroke-linejoin="round"/><path d="M1138.2,9.4 L1138.2,22.7 M1138.2,22.7 L1130,29.2 M1138.2,22.7 L1149.8,26" stroke="#1c6a7a" stroke-width="0.8" stroke-dasharray="1.2,1.2" fill="none"/>
<polygon points="1165.5,15.7 1174,9.4 1186,11.8 1185.6,26 1179,32.8 1165.8,29.2" fill="#fff"/><polygon points="1165.8,29.2 1179,32.8 1185.6,26 1174,22.7" fill="url(#gteal)"/><path d="M1165.5,15.7 L1179.3,18.2 L1179,32.8 L1165.8,29.2 Z M1165.5,15.7 L1174,9.4 L1186,11.8 L1179.3,18.2 M1186,11.8 L1185.6,26 M1185.6,26 L1179,32.8" stroke="#1c6a7a" stroke-width="1.1" fill="none" stroke-linejoin="round"/><path d="M1174,9.4 L1174,22.7 M1174,22.7 L1165.8,29.2 M1174,22.7 L1185.6,26" stroke="#1c6a7a" stroke-width="0.8" stroke-dasharray="1.2,1.2" fill="none"/>
<polygon points="1201.5,15.7 1210,9.4 1222,11.8 1221.6,26 1215,32.8 1201.8,29.2" fill="#fff"/><polygon points="1201.5,15.7 1210,9.4 1210,22.7 1201.8,29.2" fill="url(#gteal)"/><path d="M1201.5,15.7 L1215.3,18.2 L1215,32.8 L1201.8,29.2 Z M1201.5,15.7 L1210,9.4 L1222,11.8 L1215.3,18.2 M1222,11.8 L1221.6,26 M1221.6,26 L1215,32.8" stroke="#1c6a7a" stroke-width="1.1" fill="none" stroke-linejoin="round"/><path d="M1210,9.4 L1210,22.7 M1210,22.7 L1201.8,29.2 M1210,22.7 L1221.6,26" stroke="#1c6a7a" stroke-width="0.8" stroke-dasharray="1.2,1.2" fill="none"/>
<rect x="1234.9" y="9.3" width="1" height="23.4" fill="#d6d3ce"/>
<polygon points="1248.3,18.5 1250,16.3 1264.5,29.5 1262.5,32.3" fill="#4a4a4a" opacity="0.85"/>
<polygon points="1249.5,16.3 1255,11.3 1269.3,24 1264.5,29.5" fill="url(#gteal)" stroke="#0a3040" stroke-width="0.8" stroke-linejoin="round"/>
<g stroke="#0a2a36" stroke-width="1.1"><path d="M1255.5 12.8l-1.4 1.5M1258 15l-1.4 1.5M1260.5 17.2l-1.4 1.5M1263 19.4l-1.4 1.5M1265.5 21.6l-1.4 1.5"/></g>
<rect x="6" y="58.5" width="4" height="1" fill="#c4c1bc"/>
<rect x="6" y="61.5" width="4" height="1" fill="#c4c1bc"/>
<rect x="6" y="64.5" width="4" height="1" fill="#c4c1bc"/>
<path d="M35.3 54v15.5M45.6 52v15M33.5 60h3M44 59.5h3M33.5 65h3M44 64h3" stroke="#7ab0b8" stroke-width="0.7"/>
<polygon points="35.2,57.1 45.4,53.2 45.7,62.4 35.3,68.3" fill="#3cd0d8" stroke="#0a4048" stroke-width="0.9"/>
<polygon points="37.4,59.2 43.6,56.2 43.6,61.2 37.7,64.2" fill="#fff" stroke="#000" stroke-width="0.9"/>
<path d="M102.5 62.5 L109.5 58.8" stroke="#0a5a50" stroke-width="4" stroke-linecap="round"/>
<path d="M102.5 62.3 L109.5 58.6" stroke="#10c0b0" stroke-width="2.6" stroke-linecap="round"/>
<polygon points="108.8,56.2 116.8,55.5 112.3,64.2 111,60.5" fill="#d8fff8" stroke="#1a6a60" stroke-width="0.8" stroke-linejoin="round"/>
<rect x="122.8" y="52.9" width="16.2" height="16.1" fill="#000"/>
<rect x="145" y="52.9" width="16" height="16.1" fill="#c6c6c6"/>
<polygon points="201.15,58.8 206.75,58.8 203.95,56" fill="#8a8886"/><polygon points="201.15,65.2 206.75,65.2 203.95,68" fill="#8a8886"/>
<polygon points="266.25,58.8 271.85,58.8 269.05,56" fill="#8a8886"/><polygon points="266.25,65.2 271.85,65.2 269.05,68" fill="#8a8886"/>
<rect x="284" y="54.5" width="4.5" height="13" fill="#2a2a2a"/>
<rect x="285" y="55.5" width="2.5" height="3.5" fill="#e82020"/><rect x="285" y="59" width="2.5" height="3.5" fill="#f0e020"/><rect x="285" y="62.5" width="2.5" height="4" fill="#20c020"/>
<polygon points="287.5,59 292.5,59 292.5,56 297.5,61 292.5,66 292.5,63 287.5,63" fill="#3a7ae0" stroke="#1a3a8a" stroke-width="0.7"/>
<rect x="307" y="58.5" width="4" height="1" fill="#c4c1bc"/>
<rect x="307" y="61.5" width="4" height="1" fill="#c4c1bc"/>
<rect x="307" y="64.5" width="4" height="1" fill="#c4c1bc"/>
<path d="M323.7 67 L340.2 53" fill="none" stroke="#7a7a7a" stroke-width="2.6" stroke-linejoin="round"/>
<path d="M323.7 67 L340.2 53" fill="none" stroke="#fff" stroke-width="1.2" stroke-linejoin="round"/>
<circle cx="324.7" cy="68.2" r="3.1" fill="#000" opacity="0.25"/>
<circle cx="323.7" cy="67" r="3.1" fill="url(#gorange)"/>
<circle cx="341.2" cy="54.2" r="3.1" fill="#000" opacity="0.25"/>
<circle cx="340.2" cy="53" r="3.1" fill="url(#gorange)"/>
<path d="M359.5 66.6 L364.1 58.7 L370.8 66.4 L375.3 53.3" fill="none" stroke="#7a7a7a" stroke-width="2.2" stroke-linejoin="round"/>
<path d="M359.5 66.6 L364.1 58.7 L370.8 66.4 L375.3 53.3" fill="none" stroke="#fff" stroke-width="0.8" stroke-linejoin="round"/>
<circle cx="360.5" cy="67.8" r="2.8" fill="#000" opacity="0.25"/>
<circle cx="359.5" cy="66.6" r="2.8" fill="url(#gorange)"/>
<circle cx="365.1" cy="59.9" r="2.8" fill="#000" opacity="0.25"/>
<circle cx="364.1" cy="58.7" r="2.8" fill="url(#gorange)"/>
<circle cx="371.8" cy="67.6" r="2.8" fill="#000" opacity="0.25"/>
<circle cx="370.8" cy="66.4" r="2.8" fill="url(#gorange)"/>
<circle cx="376.3" cy="54.5" r="2.8" fill="#000" opacity="0.25"/>
<circle cx="375.3" cy="53.3" r="2.8" fill="url(#gorange)"/>
<circle cx="402.5" cy="60.5" r="9.3" fill="none" stroke="#7a7a7a" stroke-width="2.6"/><circle cx="402.5" cy="60.5" r="9.3" fill="none" stroke="#fff" stroke-width="1.2"/>
<circle cx="403.5" cy="61.7" r="2.9" fill="#000" opacity="0.25"/>
<circle cx="402.5" cy="60.5" r="2.9" fill="url(#gorange)"/>
<circle cx="412.8" cy="61.7" r="2.9" fill="#000" opacity="0.25"/>
<circle cx="411.8" cy="60.5" r="2.9" fill="url(#gorange)"/>
<path d="M431.8 53.3 Q444 54 446.9 67.5" fill="none" stroke="#7a7a7a" stroke-width="2.6"/><path d="M431.8 53.3 Q444 54 446.9 67.5" fill="none" stroke="#fff" stroke-width="1.2"/>
<circle cx="432.8" cy="54.5" r="2.9" fill="#000" opacity="0.25"/>
<circle cx="431.8" cy="53.3" r="2.9" fill="url(#gorange)"/>
<circle cx="432.5" cy="68.5" r="2.9" fill="#000" opacity="0.25"/>
<circle cx="431.5" cy="67.3" r="2.9" fill="url(#gorange)"/>
<circle cx="447.9" cy="68.7" r="2.9" fill="#000" opacity="0.25"/>
<circle cx="446.9" cy="67.5" r="2.9" fill="url(#gorange)"/>
<ellipse cx="475.9" cy="61.6" rx="10.2" ry="4.8" transform="rotate(-8 475.9 61.6)" fill="none" stroke="#7a7a7a" stroke-width="2.4"/><ellipse cx="475.9" cy="61.6" rx="10.2" ry="4.8" transform="rotate(-8 475.9 61.6)" fill="none" stroke="#fff" stroke-width="1"/>
<circle cx="467.7" cy="68.5" r="2.7" fill="#000" opacity="0.25"/>
<circle cx="466.7" cy="67.3" r="2.7" fill="url(#gorange)"/>
<circle cx="486.2" cy="55.8" r="2.7" fill="#000" opacity="0.25"/>
<circle cx="485.2" cy="54.6" r="2.7" fill="url(#gorange)"/>
<polygon points="503.3,53.5 514.6,50.8 520.5,60 513,69.6 502.4,65.9" fill="none" stroke="#5a5a5a" stroke-width="2.8"/><polygon points="503.3,53.5 514.6,50.8 520.5,60 513,69.6 502.4,65.9" fill="none" stroke="#fff" stroke-width="1.2"/>
<circle cx="511.8" cy="61.7" r="2.9" fill="#000" opacity="0.25"/>
<circle cx="510.8" cy="60.5" r="2.9" fill="url(#gorange)"/>
<circle cx="520.2" cy="62" r="2.9" fill="#000" opacity="0.25"/>
<circle cx="519.2" cy="60.8" r="2.9" fill="url(#gorange)"/>
<rect x="538.9" y="53.3" width="17.4" height="15" fill="none" stroke="#6a6a6a" stroke-width="2.6"/><rect x="538.9" y="53.3" width="17.4" height="15" fill="none" stroke="#fff" stroke-width="1.1"/>
<circle cx="540.3" cy="68.4" r="2.9" fill="#000" opacity="0.25"/>
<circle cx="539.3" cy="67.2" r="2.9" fill="url(#gorange)"/>
<circle cx="556.7" cy="54.7" r="2.9" fill="#000" opacity="0.25"/>
<circle cx="555.7" cy="53.5" r="2.9" fill="url(#gorange)"/>
<g transform="translate(574 70) scale(1.13 1)"><text x="1.2" y="1" font-family="Liberation Sans" font-style="italic" font-weight="bold" font-size="24" fill="#444" opacity="0.5">A</text><text x="0" y="0" font-family="Liberation Sans" font-style="italic" font-weight="bold" font-size="24" fill="#ffe000" stroke="#111" stroke-width="0.9">A</text></g>
<text x="611" y="56.8" font-family="Liberation Sans" font-weight="bold" font-size="7.5" fill="#fff" stroke="#888" stroke-width="0.4">1.00</text>
<path d="M611.8 59.8 H627.4" stroke="#111" stroke-width="2"/><path d="M611.8 59.8 V69 M627.4 59.8 V69" stroke="#7a7a7a" stroke-width="2.2"/><path d="M611.8 60 V69 M627.4 60 V69" stroke="#fff" stroke-width="0.8"/>
<circle cx="611.8" cy="59.8" r="1.7" fill="#111"/><circle cx="627.4" cy="59.8" r="1.7" fill="#111"/>
<circle cx="612.8" cy="70.3" r="2.8" fill="#000" opacity="0.25"/>
<circle cx="611.8" cy="69.1" r="2.8" fill="url(#gorange)"/>
<circle cx="628.4" cy="70.3" r="2.8" fill="#000" opacity="0.25"/>
<circle cx="627.4" cy="69.1" r="2.8" fill="url(#gorange)"/>
<circle cx="620.3" cy="61" r="2.8" fill="#000" opacity="0.25"/>
<circle cx="619.3" cy="59.8" r="2.8" fill="url(#gorange)"/>
<path d="M648.4 64.8 Q648.5 52 655.7 54.6 Q662.5 53 662.9 65.9" fill="none" stroke="#7a7a7a" stroke-width="2.6"/><path d="M648.4 64.8 Q648.5 52 655.7 54.6 Q662.5 53 662.9 65.9" fill="none" stroke="#fff" stroke-width="1.1"/>
<circle cx="649.4" cy="66" r="2.9" fill="#000" opacity="0.25"/>
<circle cx="648.4" cy="64.8" r="2.9" fill="url(#gorange)"/>
<circle cx="656.7" cy="55.8" r="2.9" fill="#000" opacity="0.25"/>
<circle cx="655.7" cy="54.6" r="2.9" fill="url(#gorange)"/>
<circle cx="663.9" cy="67.1" r="2.9" fill="#000" opacity="0.25"/>
<circle cx="662.9" cy="65.9" r="2.9" fill="url(#gorange)"/>
<circle cx="691.3" cy="60.8" r="5.2" fill="url(#gorange)" stroke="#c07000" stroke-width="0.4"/>
<g transform="translate(717 69.3) scale(1.55 1)"><text x="0.8" y="0.8" font-family="Liberation Serif" font-style="italic" font-size="23" fill="#222" opacity="0.6">S</text><text x="0" y="0" font-family="Liberation Serif" font-style="italic" font-size="23" fill="#f2d800" stroke="#222" stroke-width="0.7">S</text></g>
<polygon points="752.7,58.5 765.5,51.4 765.5,71 762,72.4 752.7,72.4" fill="#444"/>
<polygon points="754.8,57.7 766.3,51.2 766.3,70.3 762.1,72.1 754.8,72.1" fill="#f9a519" stroke="#333" stroke-width="0.7"/>
<polygon points="765.2,49.1 775.2,49.9 766.3,55.4 766.3,51.2" fill="#f7b020" stroke="#333" stroke-width="0.7"/>
<polygon points="766.3,61.3 774.6,56 774.6,63.3 766.3,68" fill="#f9b52a" stroke="#333" stroke-width="0.7"/>
<path d="M792.6 66.2 C792.5 51.5 807.6 51.5 807.5 66.2" fill="none" stroke="#7a7a7a" stroke-width="2.4"/><path d="M792.6 66.2 C792.5 51.5 807.6 51.5 807.5 66.2" fill="none" stroke="#fff" stroke-width="1"/>
<rect x="792.5" y="50.5" width="3" height="3" fill="#f5a000"/><rect x="804.5" y="50.5" width="3" height="3" fill="#f5a000"/>
<circle cx="793.6" cy="67.4" r="2.9" fill="#000" opacity="0.25"/>
<circle cx="792.6" cy="66.2" r="2.9" fill="url(#gorange)"/>
<circle cx="808.5" cy="67.4" r="2.9" fill="#000" opacity="0.25"/>
<circle cx="807.5" cy="66.2" r="2.9" fill="url(#gorange)"/>
<rect x="824" y="58" width="4" height="1" fill="#c4c1bc"/>
<rect x="824" y="61" width="4" height="1" fill="#c4c1bc"/>
<rect x="824" y="64" width="4" height="1" fill="#c4c1bc"/>
<polygon points="849,49.6 853,54 851,54 851,58.5 855.5,58.5 855.5,56.5 859.2,60.2 855.5,64 855.5,62 851,62 851,66.5 853,66.5 849,70.4 845,66.5 847,66.5 847,62 842.5,62 842.5,64 839,60.2 842.5,56.5 842.5,58.5 847,58.5 847,54 845,54" fill="url(#gblue)" stroke="#12305a" stroke-width="0.8"/>
<path d="M877 59.5 A7.8 7.8 0 1 0 888.2 53.5" fill="none" stroke="#10288a" stroke-width="4.6"/>
<path d="M877 59.5 A7.8 7.8 0 1 0 888.2 53.5" fill="none" stroke="#3a7ef0" stroke-width="3"/>
<polygon points="880.6,52 890,50.3 885.6,59" fill="#3a7ef0" stroke="#10288a" stroke-width="0.8" stroke-linejoin="round"/>
<path d="M912 55.5 L915 52 H928.8 V62 Q928.5 67.5 920.2 70" fill="none" stroke="#0a1a70" stroke-width="3.2" stroke-linejoin="round"/>
<path d="M912 55.5 L915 52 H928.8 V62 Q928.5 67.5 920.2 70" fill="none" stroke="#2a6ae8" stroke-width="1.8" stroke-linejoin="round"/>
<path d="M915.6 60.2 L918 57.6 H922.8 V61.5 Q922.5 63.5 920 64.8" fill="none" stroke="#0a1a70" stroke-width="3" stroke-linejoin="round"/>
<path d="M915.6 60.2 L918 57.6 H922.8 V61.5 Q922.5 63.5 920 64.8" fill="none" stroke="#2a6ae8" stroke-width="1.6" stroke-linejoin="round"/>
<polygon points="946,60.5 951,55.5 951,58.5 955.5,58.5 955.5,62.5 951,62.5 951,65.5" fill="#2a6ad8" stroke="#12306a" stroke-width="0.6"/>
<polygon points="967.4,60.5 962.4,55.5 962.4,58.5 958,58.5 958,62.5 962.4,62.5 962.4,65.5" fill="#2a6ad8" stroke="#12306a" stroke-width="0.6"/>
<rect x="955.3" y="53.5" width="2.6" height="14" fill="#2a5ac8"/>
<polygon points="994.2,50.5 1004.5,61.5 999,61.5 999,71.5 989.5,71.5 989.5,61.5 984,61.5" fill="#222" opacity="0.45"/>
<polygon points="993.2,49.5 1003.5,60.5 998,60.5 998,70.5 988.5,70.5 988.5,60.5 983,60.5" fill="url(#gblue)" stroke="#102a60" stroke-width="0.8"/>
<polygon points="1024,49.5 1034,49.5 1034,59.5 1039.2,59.5 1029,70.5 1019,59.5 1024,59.5" fill="url(#gblue)" stroke="#102a60" stroke-width="0.8"/>
<rect x="1055.6" y="52.2" width="18.8" height="18" fill="none" stroke="#1a5ae8" stroke-width="1.6" stroke-dasharray="2.2,1.6"/>
<rect x="1056" y="61.5" width="9.5" height="9" fill="#fff" stroke="#102a8a" stroke-width="2.6"/>
<path d="M1064.5 61 L1071.5 55" stroke="#1a3aa8" stroke-width="3.2"/><path d="M1064.8 60.8 L1071 55.5" stroke="#3a8af0" stroke-width="1.6"/>
<polygon points="1099.7,50 1110.8,66.3 1095.7,70.6" fill="#1010e8" stroke="#000" stroke-width="1.3" stroke-linejoin="round"/>
<path d="M1091 54.5 L1101.5 64.5" stroke="#0a1a40" stroke-width="5.6" stroke-linecap="butt"/>
<path d="M1091 54.5 L1101.5 64.5" stroke="#5a9ae8" stroke-width="3.8" stroke-linecap="butt"/>
<polygon points="1099.3,66.6 1103.5,62.4 1104.3,67.5" fill="#fff" stroke="#000" stroke-width="0.7"/>
<path d="M1126.8 57.8 L1135.2 50.8 L1138.2 56.5 L1146.8 51.2" fill="none" stroke="#8c8c8c" stroke-width="3.4" stroke-linejoin="round"/><path d="M1126.8 57.8 L1135.2 50.8 L1138.2 56.5 L1146.8 51.2" fill="none" stroke="#fff" stroke-width="1.5" stroke-linejoin="round"/>
<path d="M1126.8 68 Q1131.5 61.5 1136.5 65.5 Q1141.5 69.5 1146.8 63.5" fill="none" stroke="#8c8c8c" stroke-width="3.4"/><path d="M1126.8 68 Q1131.5 61.5 1136.5 65.5 Q1141.5 69.5 1146.8 63.5" fill="none" stroke="#fff" stroke-width="1.5"/>
<polygon points="1132.5,59.5 1141.5,59.5 1137.5,64" fill="#9a9a9a"/>
<path d="M1172.8 52 V61 M1168.3 56.5 H1177.3" stroke="#6e6e6e" stroke-width="4"/><path d="M1172.8 52.6 V60.4 M1168.9 56.5 H1176.7" stroke="#9a9a9a" stroke-width="2.4"/>
<rect x="1162.3" y="65.5" width="21.5" height="3" fill="#a8a8a8"/><rect x="1162.8" y="66" width="20.5" height="1.2" fill="#eee"/><circle cx="1173" cy="67" r="2.8" fill="#9a9a9a" stroke="#777" stroke-width="0.6"/>
<rect x="1203.8" y="54.2" width="10" height="3" fill="#7a7a7a"/>
<rect x="1198.5" y="63.5" width="20.7" height="3" fill="#a8a8a8"/><rect x="1199" y="64" width="19.7" height="1.2" fill="#eee"/><circle cx="1209" cy="65" r="2.8" fill="#9a9a9a" stroke="#777" stroke-width="0.6"/>
<polygon points="1236.5,66.5 1246,62 1256,66.5 1246.5,71.5" fill="#fff" stroke="#333" stroke-width="1.5"/>
<polygon points="1234.5,55.5 1244,50.5 1254.5,54.5 1245,59.5" fill="#4a90f8" stroke="#000" stroke-width="0.9" stroke-linejoin="round"/>
<polygon points="1234.5,55.5 1245,59.5 1245,67.5 1234.5,63.5" fill="#1a40e0" stroke="#000" stroke-width="0.9" stroke-linejoin="round"/>
<polygon points="1245,59.5 1254.5,54.5 1254.5,62.5 1245,67.5" fill="#0a28b8" stroke="#000" stroke-width="0.9" stroke-linejoin="round"/>
<path d="M1292.5 58.8 L1295.5 61.7 L1292.5 64.6 M1296.5 58.8 L1299.5 61.7 L1296.5 64.6" fill="none" stroke="#000" stroke-width="1.5"/><rect x="250.5" y="88.5" width="8" height="9" rx="1.5" fill="none" stroke="#6e6c68" stroke-width="1"/>
<rect x="253" y="90" width="4" height="3" fill="none" stroke="#6e6c68" stroke-width="0.9"/><rect x="251.5" y="92.5" width="4" height="3" fill="#f2f1f0" stroke="#6e6c68" stroke-width="0.9"/>
<rect x="264.5" y="88.5" width="10.5" height="10.5" rx="1.5" fill="none" stroke="#6e6c68" stroke-width="1"/>
<path d="M267 91 L272.5 96.5 M272.5 91 L267 96.5" stroke="#4a4844" stroke-width="1.8"/>
<polygon points="50.1,168.4 53.1,166.4 61.6,166.9 61.6,175.4 58.6,177.5 50.1,176.9" fill="#0a2af0" stroke="#111" stroke-width="0.8" stroke-linejoin="round"/>
<polygon points="58.6,168.9 61.6,166.9 61.6,175.4 58.6,177.5" fill="#0818b0"/>
<path d="M50.1 168.4 L58.6 168.9 L61.6 166.9 L58.6 168.9" fill="none" stroke="#111" stroke-width="0.8"/>
<path d="M58.6 168.9 V177.5" stroke="#111" stroke-width="0.8"/>
<polygon points="50.1,187.33 53.1,185.33 61.6,185.83 61.6,194.33 58.6,196.43 50.1,195.83" fill="#0a2af0" stroke="#111" stroke-width="0.8" stroke-linejoin="round"/>
<polygon points="58.6,187.83 61.6,185.83 61.6,194.33 58.6,196.43" fill="#0818b0"/>
<path d="M50.1 187.33 L58.6 187.83 L61.6 185.83 L58.6 187.83" fill="none" stroke="#111" stroke-width="0.8"/>
<path d="M58.6 187.83 V196.43" stroke="#111" stroke-width="0.8"/>
<polygon points="50.1,206.26 53.1,204.26 61.6,204.76 61.6,213.26 58.6,215.36 50.1,214.76" fill="#0a2af0" stroke="#111" stroke-width="0.8" stroke-linejoin="round"/>
<polygon points="58.6,206.76 61.6,204.76 61.6,213.26 58.6,215.36" fill="#0818b0"/>
<path d="M50.1 206.26 L58.6 206.76 L61.6 204.76 L58.6 206.76" fill="none" stroke="#111" stroke-width="0.8"/>
<path d="M58.6 206.76 V215.36" stroke="#111" stroke-width="0.8"/>
<polygon points="50.1,225.19 53.1,223.19 61.6,223.69 61.6,232.19 58.6,234.29 50.1,233.69" fill="#0a2af0" stroke="#111" stroke-width="0.8" stroke-linejoin="round"/>
<polygon points="58.6,225.69 61.6,223.69 61.6,232.19 58.6,234.29" fill="#0818b0"/>
<path d="M50.1 225.19 L58.6 225.69 L61.6 223.69 L58.6 225.69" fill="none" stroke="#111" stroke-width="0.8"/>
<path d="M58.6 225.69 V234.29" stroke="#111" stroke-width="0.8"/>
<polygon points="50.1,244.12 53.1,242.12 61.6,242.62 61.6,251.12 58.6,253.22 50.1,252.62" fill="#0a2af0" stroke="#111" stroke-width="0.8" stroke-linejoin="round"/>
<polygon points="58.6,244.62 61.6,242.62 61.6,251.12 58.6,253.22" fill="#0818b0"/>
<path d="M50.1 244.12 L58.6 244.62 L61.6 242.62 L58.6 244.62" fill="none" stroke="#111" stroke-width="0.8"/>
<path d="M58.6 244.62 V253.22" stroke="#111" stroke-width="0.8"/>
<polygon points="50.1,263.05 53.1,261.05 61.6,261.55 61.6,270.05 58.6,272.15 50.1,271.55" fill="#0a2af0" stroke="#111" stroke-width="0.8" stroke-linejoin="round"/>
<polygon points="58.6,263.55 61.6,261.55 61.6,270.05 58.6,272.15" fill="#0818b0"/>
<path d="M50.1 263.05 L58.6 263.55 L61.6 261.55 L58.6 263.55" fill="none" stroke="#111" stroke-width="0.8"/>
<path d="M58.6 263.55 V272.15" stroke="#111" stroke-width="0.8"/>
<polygon points="50.1,281.98 53.1,279.98 61.6,280.48 61.6,288.98 58.6,291.08 50.1,290.48" fill="#7a7a7a" stroke="#111" stroke-width="0.8" stroke-linejoin="round"/>
<polygon points="58.6,282.48 61.6,280.48 61.6,288.98 58.6,291.08" fill="#5a5a5a"/>
<path d="M50.1 281.98 L58.6 282.48 L61.6 280.48 L58.6 282.48" fill="none" stroke="#111" stroke-width="0.8"/>
<path d="M58.6 282.48 V291.08" stroke="#111" stroke-width="0.8"/>
<polygon points="50.1,300.91 53.1,298.91 61.6,299.41 61.6,307.91 58.6,310.01 50.1,309.41" fill="#0a2af0" stroke="#111" stroke-width="0.8" stroke-linejoin="round"/>
<polygon points="58.6,301.41 61.6,299.41 61.6,307.91 58.6,310.01" fill="#0818b0"/>
<path d="M50.1 300.91 L58.6 301.41 L61.6 299.41 L58.6 301.41" fill="none" stroke="#111" stroke-width="0.8"/>
<path d="M58.6 301.41 V310.01" stroke="#111" stroke-width="0.8"/>
<polygon points="50.1,319.84 53.1,317.84 61.6,318.34 61.6,326.84 58.6,328.94 50.1,328.34" fill="#0a2af0" stroke="#111" stroke-width="0.8" stroke-linejoin="round"/>
<polygon points="58.6,320.34 61.6,318.34 61.6,326.84 58.6,328.94" fill="#0818b0"/>
<path d="M50.1 319.84 L58.6 320.34 L61.6 318.34 L58.6 320.34" fill="none" stroke="#111" stroke-width="0.8"/>
<path d="M58.6 320.34 V328.94" stroke="#111" stroke-width="0.8"/>
<polygon points="50.1,338.77 53.1,336.77 61.6,337.27 61.6,345.77 58.6,347.87 50.1,347.27" fill="#7a7a7a" stroke="#111" stroke-width="0.8" stroke-linejoin="round"/>
<polygon points="58.6,339.27 61.6,337.27 61.6,345.77 58.6,347.87" fill="#5a5a5a"/>
<path d="M50.1 338.77 L58.6 339.27 L61.6 337.27 L58.6 339.27" fill="none" stroke="#111" stroke-width="0.8"/>
<path d="M58.6 339.27 V347.87" stroke="#111" stroke-width="0.8"/>
<rect x="67.4" y="334.7" width="134" height="18" fill="none" stroke="#555" stroke-width="0.8" stroke-dasharray="1,1.2"/>
<rect x="49.3" y="360.5" width="9" height="8.5" fill="none" stroke="#1a1aff" stroke-width="1.1"/>
<circle cx="58.3" cy="359.8" r="4.6" fill="none" stroke="#1a1aff" stroke-width="1.1"/>
<rect x="49.3" y="379.43" width="9" height="8.5" fill="none" stroke="#1a1aff" stroke-width="1.1"/>
<circle cx="58.3" cy="378.73" r="4.6" fill="none" stroke="#1a1aff" stroke-width="1.1"/>
<polygon points="267.2,146.5 272.2,146.5 269.7,143.7" fill="#6a6864"/><polygon points="267.2,390 272.2,390 269.7,392.8" fill="#8a8884"/>
<path d="M267.5 328.8h4M267.5 331.4h4M267.5 334h4" stroke="#8a8884" stroke-width="0.8"/>
<path d="M137.5 400v3.5M140.5 400v3.5M143.5 400v3.5" stroke="#b4b0aa" stroke-width="0.9"/>
<path d="M279 394.5h3.5M279 397.5h3.5M279 400.5h3.5" stroke="#c4c0ba" stroke-width="0.9"/>
<path d="M4.3 683.4 L12.8 708.5 Q14 712.3 17.5 712.3 L40 712.3 Q43.5 712.3 44.8 708.5 L53.2 683.4" fill="#fff" stroke="#4a4a4a" stroke-width="0.9"/>
<path d="M54.3 685 L62.5 707.8 Q64 711.3 67.5 711.3 L86.5 711.3 Q90 711.3 91.4 707.8 L99.7 685" fill="#f2f1f0" stroke="#4a4a4a" stroke-width="0.9"/>
<rect x="292" y="691.7" width="3.6" height="12" fill="#e82a10"/><rect x="292" y="691.7" width="8" height="3" fill="#e82a10"/>
<circle cx="301.3" cy="699.5" r="4.2" fill="#1a3aa0"/><circle cx="301.3" cy="699.5" r="1.6" fill="#fff"/>
<g stroke="#1a3aa0" stroke-width="1.8"><path d="M301.3 693.8v11.4M295.6 699.5h11.4M297.3 695.5l8 8M305.3 695.5l-8 8"/></g><circle cx="301.3" cy="699.5" r="1.6" fill="#fff"/>
<path d="M486.5 695.3 L495.5 704.3 M495.5 695.3 L486.5 704.3" stroke="#5a5854" stroke-width="3.2"/>
<path d="M1283 86v3.5M1286 86v3.5M1289 86v3.5" stroke="#c4c0ba" stroke-width="0.9"/>
<path d="M1283.8 104.1 v-3.2 a4 4 0 0 1 8 0 v3.2" fill="none" stroke="#0c3a30" stroke-width="2.8"/>
<path d="M1283.8 104.1 v-3.2 a4 4 0 0 1 8 0 v3.2" fill="none" stroke="#0e9a7e" stroke-width="1.4"/>
<rect x="1282.55" y="104.1" width="10.5" height="8" fill="#0e9a7e" stroke="#0c3a30" stroke-width="1"/>
<path d="M1281.3 136.7 L1294.3 124.7" stroke="#0c3a30" stroke-width="3.4" stroke-linecap="round"/>
<path d="M1281.3 136.7 L1294.3 124.7" stroke="#0e9a7e" stroke-width="2" stroke-linecap="round"/>
<ellipse cx="1287.8" cy="130.7" rx="4.2" ry="3" transform="rotate(-40 1287.8 130.7)" fill="#0e9a7e" stroke="#0c3a30" stroke-width="0.8"/>
<path d="M1280.8 162.3 h14 M1287.8 162.3 v-12" stroke="#0c3a30" stroke-width="4"/>
<path d="M1281.5 162.3 h12.6 M1287.8 161.6 v-11.3" stroke="#0e9a7e" stroke-width="2.4"/>
<path d="M1284.5 176.4 v13 M1291.1 176.4 v13 M1281.3 179.6 h13 M1281.3 186.2 h13" stroke="#0c3a30" stroke-width="4.4" stroke-linecap="round"/>
<path d="M1284.5 176.9 v12 M1291.1 176.9 v12 M1281.8 179.6 h12 M1281.8 186.2 h12" stroke="#0e9a7e" stroke-width="2.8" stroke-linecap="round"/>
<path d="M1281.3 202.5 l13 13 M1294.3 202.5 l-13 13" stroke="#0c3a30" stroke-width="4.8"/>
<path d="M1281.8 203 l12 12 M1293.8 203 l-12 12" stroke="#0e9a7e" stroke-width="3.1"/>
<path d="M1281.3 234.6 L1294.3 228.6 M1281.3 240.6 L1294.3 234.6" stroke="#0c3a30" stroke-width="3.8" stroke-linecap="round"/>
<path d="M1281.5 234.5 L1294.1 228.7 M1281.5 240.5 L1294.1 234.5" stroke="#0e9a7e" stroke-width="2.1" stroke-linecap="round"/>
<path d="M1283.3 265.7 L1294.3 255.2" stroke="#0c3a30" stroke-width="3.8" stroke-linecap="round"/>
<path d="M1283.3 265.7 L1294.3 255.2" stroke="#0e9a7e" stroke-width="2.2" stroke-linecap="round"/>
<circle cx="1282.8" cy="266.2" r="3.4" fill="#0e9a7e" stroke="#0c3a30" stroke-width="1"/>
<path d="M1287.8 281 L1294.1 287.3 L1287.8 293.6 L1281.5 287.3 Z" fill="#fff" stroke="#0c3a30" stroke-width="1.8"/>
<circle cx="1287.8" cy="281.3" r="2.9" fill="#0e9a7e" stroke="#0c3a30" stroke-width="0.9"/>
<circle cx="1293.8" cy="287.3" r="2.9" fill="#0e9a7e" stroke="#0c3a30" stroke-width="0.9"/>
<circle cx="1287.8" cy="293.3" r="2.9" fill="#0e9a7e" stroke="#0c3a30" stroke-width="0.9"/>
<circle cx="1281.8" cy="287.3" r="2.9" fill="#0e9a7e" stroke="#0c3a30" stroke-width="0.9"/>
<circle cx="1287.8" cy="313.4" r="7" fill="#0e9a7e" stroke="#0c3a30" stroke-width="1.2"/><circle cx="1287.8" cy="313.4" r="4.2" fill="#fff" stroke="#0c3a30" stroke-width="1"/><circle cx="1287.8" cy="313.4" r="2.4" fill="#0e9a7e" stroke="#0c3a30" stroke-width="0.6"/>
<circle cx="1282.5" cy="340" r="2.4" fill="#0e9a7e" stroke="#0c3a30" stroke-width="0.8"/>
<circle cx="1287.8" cy="340" r="2.4" fill="#0e9a7e" stroke="#0c3a30" stroke-width="0.8"/>
<circle cx="1293.1" cy="340" r="2.4" fill="#0e9a7e" stroke="#0c3a30" stroke-width="0.8"/>
<path d="M1281.3 366.1 L1290.8 372.1" stroke="#0c3a30" stroke-width="3.8" stroke-linecap="round"/><path d="M1281.3 366.1 L1290.8 372.1" stroke="#0e9a7e" stroke-width="2.1" stroke-linecap="round"/>
<circle cx="1291.3" cy="361.1" r="2.4" fill="#0e9a7e" stroke="#0c3a30" stroke-width="0.8"/>
<path d="M1287.8 384.7 v14 M1280.8 391.7 h14" stroke="#0c3a30" stroke-width="4.4"/><path d="M1287.8 385.3 v12.8 M1281.4 391.7 h12.8" stroke="#0e9a7e" stroke-width="2.8"/>
<path d="M1283.8 423.8 v-7 h6 v3" fill="none" stroke="#0e9a7e" stroke-width="1.8"/>
<text x="1286.8" y="414.3" font-family="Liberation Sans" font-size="5" fill="#0c3a30">1.00</text>
<text x="1282.3" y="422.8" font-family="Liberation Sans" font-size="5" fill="#0c3a30" transform="rotate(-90 1282.3 422.8)">1.00</text>
<rect x="1281.8" y="437.9" width="12" height="12" fill="#0e9a7e" stroke="#0c3a30" stroke-width="1"/>
<circle cx="1285.3" cy="446.4" r="1.3" fill="none" stroke="#0c3a30" stroke-width="0.8"/></svg>
<div class="t" style="left:13.1px;top:691.69px;font-size:14.9px;color:#3c3c3c;">View</div>
<div class="t" style="left:62.5px;top:689.66px;font-size:14.1px;color:#3c3c3c;">Data</div>
<div class="a" style="left:0;top:0;width:2px;height:745px;background:linear-gradient(#0b2a8c,#1f3e8e 60%,#3a4a7e)"></div></body></html>
